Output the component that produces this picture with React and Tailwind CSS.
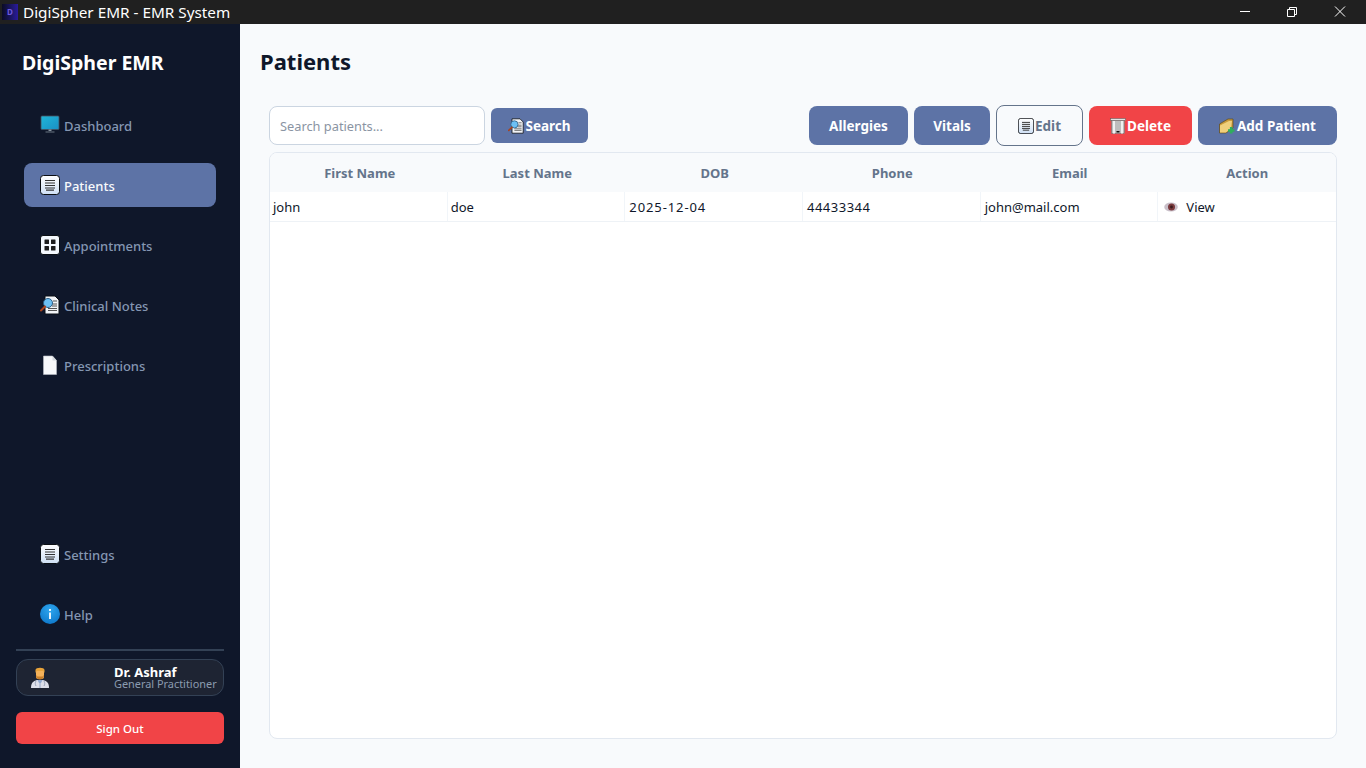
import React from 'react';

const font = "font-['Noto_Sans','Liberation_Sans',sans-serif]";

function ListIcon({ size = 20 }) {
  return (
    <svg width={size} height={size} viewBox="0 0 20 20" className="shrink-0">
      <defs>
        <linearGradient id="listBg" x1="0" y1="0" x2="0" y2="1">
          <stop offset="0" stopColor="#ffffff" />
          <stop offset="1" stopColor="#cfe0f5" />
        </linearGradient>
      </defs>
      <rect x="0.5" y="0.5" width="19" height="19" rx="3" fill="url(#listBg)" stroke="#0b0f14" />
      <path d="M5 5.500h10M5 8h10M5 10.500h10M5 13h10M6 15.200h8" stroke="#333" strokeWidth="1.200" />
    </svg>
  );
}

function GridIcon() {
  return (
    <svg width="20" height="20" viewBox="0 0 20 20" className="shrink-0">
      <rect x="0.5" y="0.5" width="19" height="19" rx="2.5" fill="#f4f8fd" stroke="#0b0f14" />
      <rect x="4.5" y="4.5" width="4.5" height="4.5" rx="0.5" fill="#1c1c1c" />
      <rect x="11" y="4.5" width="4.5" height="4.5" rx="0.5" fill="#1c1c1c" />
      <rect x="4.5" y="11" width="4.5" height="4.5" rx="0.5" fill="#1c1c1c" />
      <rect x="11" y="11" width="4.5" height="4.5" rx="0.5" fill="#1c1c1c" />
    </svg>
  );
}

function MonitorIcon() {
  return (
    <svg width="20" height="20" viewBox="0 0 20 20" className="shrink-0">
      <defs>
        <linearGradient id="screen" x1="0" y1="0" x2="1" y2="1">
          <stop offset="0" stopColor="#1fb6d8" />
          <stop offset="1" stopColor="#1a8fc4" />
        </linearGradient>
      </defs>
      <rect x="1" y="1" width="18" height="13.500" rx="1" fill="url(#screen)" stroke="#47525e" strokeWidth="0.800" />
      <path d="M8.500 14.500h3v1.500h-3z" fill="#8b97a3" />
      <path d="M5.500 16.500h9v1h-9z" fill="#6b7683" />
    </svg>
  );
}

function NotesIcon({ size = 20 }) {
  return (
    <svg width={size} height={size} viewBox="0 0 20 20" className="shrink-0">
      <path d="M5 1h10l4 4v14H5z" fill="#f2f4f7" stroke="#0b0f14" strokeWidth="1" />
      <path d="M12 9h5M12 11h5M8 13.500h9M8 15.500h9M13 6h4" stroke="#555" strokeWidth="1" />
      <circle cx="8" cy="8" r="4.500" fill="#6cc0f5" stroke="#2c5f88" strokeWidth="1" />
      <path d="M5 11.500L1 15.500" stroke="#a8431f" strokeWidth="2" strokeLinecap="round" />
    </svg>
  );
}

function PageIcon() {
  return (
    <svg width="20" height="20" viewBox="0 0 20 20" className="shrink-0">
      <path d="M3.500 1h9l4 4.500V19.500h-13z" fill="#f7f8fa" stroke="#b8bec6" strokeWidth="0.600" />
      <path d="M12.500 1v4.500h4z" fill="#d5d9de" />
    </svg>
  );
}

function InfoIcon() {
  return (
    <svg width="20" height="20" viewBox="0 0 20 20" className="shrink-0">
      <defs>
        <radialGradient id="info" cx="0.5" cy="0.3" r="0.800">
          <stop offset="0" stopColor="#2ea6ee" />
          <stop offset="1" stopColor="#0b74c8" />
        </radialGradient>
      </defs>
      <circle cx="10" cy="10" r="10" fill="url(#info)" />
      <rect x="9" y="8.500" width="2" height="6.500" fill="#e8f4fd" />
      <rect x="9" y="5" width="2" height="2" fill="#e8f4fd" />
    </svg>
  );
}

function DoctorIcon() {
  return (
    <svg width="18" height="21" viewBox="0 0 18 21" className="shrink-0">
      <path d="M0 21c0-5 2-7 6-8h6c4 1 6 3 6 8z" fill="#dcdfea" />
      <path d="M6.500 13l2.500 5 2.500-5z" fill="#8fa8cf" />
      <path d="M5 14c-1 2-1 3 0 5M13 14c1 2 1 3 0 5" stroke="#7a86a0" strokeWidth="0.700" fill="none" />
      <rect x="5" y="2" width="8" height="10" rx="2.500" fill="#f5b25a" />
      <path d="M4.500 6V3c0-3 9-3 9 0v3l-1-2h-7z" fill="#e8a33a" />
      <path d="M5 8c0 6 8 6 8 0l-1.500 1.500h-5z" fill="#c97f2a" />
      <rect x="8" y="16" width="2" height="5" fill="#b9c3d8" />
    </svg>
  );
}

function TrashIcon() {
  return (
    <svg width="16" height="16" viewBox="0 0 16 16" className="shrink-0">
      <rect x="0.500" y="0.500" width="15" height="2" fill="#e2e2e2" stroke="#555" strokeWidth="0.500" />
      <rect x="1.500" y="2.500" width="13" height="13" fill="#bdbdbd" stroke="#666" strokeWidth="0.500" />
      <path d="M4 3v12.500M12 3v12.500" stroke="#f0f0f0" strokeWidth="2" />
      <rect x="6.500" y="13" width="3" height="1.500" fill="#111" />
    </svg>
  );
}

function FolderAddIcon() {
  return (
    <svg width="16" height="16" viewBox="0 0 16 16" className="shrink-0">
      <path d="M0.500 6L9 1h5v9l-7 5H0.500z" fill="#c99a3c" stroke="#5d4a1e" strokeWidth="0.700" />
      <path d="M1 7.500l9-4.500 3 0-1 7-5 4.500H1z" fill="#f0cf7c" />
      <path d="M9 12.500h6.500M12.200 9v6.500" stroke="#2faf5c" strokeWidth="2.600" />
    </svg>
  );
}

function EyeIcon() {
  return (
    <svg width="14" height="10" viewBox="0 0 14 10" className="shrink-0">
      <ellipse cx="7" cy="5" rx="6.800" ry="4.600" fill="#c9bfc9" />
      <circle cx="7.500" cy="5" r="3.500" fill="#7a3a3d" />
      <circle cx="7.500" cy="5" r="1.400" fill="#3a1a1c" />
    </svg>
  );
}

function NavItem({ icon, label, active }) {
  return (
    <div className={`mx-6 mb-4 flex h-11 items-center gap-1 rounded-lg pl-4 text-[13px] font-medium ${active ? 'bg-[#5d73a6] text-[#f8fafc]' : 'text-[#8496b2]'}`}>
      <span className="flex w-5 justify-center">{icon}</span>
      <span className="mt-1">{label}</span>
    </div>
  );
}

const columns = ['First Name', 'Last Name', 'DOB', 'Phone', 'Email', 'Action'];
const patient = [
  { value: 'john', cls: 'pl-[3px]' },
  { value: 'doe', cls: 'pl-[3px]' },
  { value: '2025-12-04', cls: 'pl-1 tracking-[0.900px]' },
  { value: '44433344', cls: 'pl-1 tracking-[0.500px]' },
  { value: 'john@mail.com', cls: 'pl-1' },
];

export default function App() {
  return (
    <div className={`flex h-screen flex-col overflow-hidden bg-[#f8fafc] ${font}`}>
      <div className="flex h-6 shrink-0 items-center bg-[#202020] pl-[2px] text-white">
        <div className="mr-[5px] flex h-4 w-4 items-center justify-center bg-gradient-to-r from-[#0b0b25] to-[#2a1a9c] text-[8px] font-bold text-[#6d5ae0]">D</div>
        <span className="text-[15.300px]">DigiSpher EMR - EMR System</span>
        <div className="ml-auto flex items-center">
          <svg width="46" height="24" viewBox="0 0 46 24" className="mr-[1px]"><path d="M18 11.500h10" stroke="#fff" /></svg>
          <svg width="46" height="24" viewBox="0 0 46 24" className="mr-[2px]"><path d="M18.500 9.500h7v7h-7zM20.500 9.500v-2h7v7h-2" fill="none" stroke="#fff" /></svg>
          <svg width="46" height="24" viewBox="0 0 46 24" className="mr-[3px]"><path d="M18 6.500l10 10M28 6.500l-10 10" stroke="#fff" /></svg>
        </div>
      </div>

      <div className="flex min-h-0 flex-1">
        <aside className="flex w-60 shrink-0 flex-col bg-[#0f172a]">
          <div className="h-[79px] pl-[22px] pt-[23px] text-[19.500px] leading-[32px] font-bold text-white">DigiSpher EMR</div>
          <NavItem icon={<MonitorIcon />} label="Dashboard" />
          <NavItem icon={<ListIcon />} label="Patients" active />
          <NavItem icon={<GridIcon />} label="Appointments" />
          <NavItem icon={<NotesIcon />} label="Clinical Notes" />
          <NavItem icon={<PageIcon />} label="Prescriptions" />

          <div className="mt-auto">
            <NavItem icon={<ListIcon />} label="Settings" />
            <NavItem icon={<InfoIcon />} label="Help" />
            <div className="mx-4 -mt-[3px] h-[2px] bg-[#334155]" />
            <div className="mx-4 mt-[8px] flex h-[37px] items-center rounded-xl border border-[#334155] bg-[#1e2433] pl-[14px]">
              <DoctorIcon />
              <div className="ml-[65px] flex flex-col text-[13px] leading-[11px] whitespace-nowrap">
                <span className="font-bold text-white">Dr. Ashraf</span>
                <span className="text-[10.900px] text-[#8b9bb0]">General Practitioner</span>
              </div>
            </div>
            <div className="mx-4 mt-4 mb-6 flex h-8 items-center justify-center rounded-md bg-[#f14447] pt-[2px] text-[11.500px] font-medium text-white">Sign Out</div>
          </div>
        </aside>

        <main className="flex min-w-0 flex-1 flex-col pr-[29px] pb-[29px] pl-[29px]">
          <h1 className="-ml-[9px] pt-[19px] text-[22px] leading-[36px] font-bold text-[#0f172a]">Patients</h1>

          <div className="mt-[26px] flex h-[41px] items-center text-[13.500px] font-bold">
            <div className="flex h-[39px] w-[216px] items-center rounded-lg border border-[#cbd5e1] bg-white pt-[2px] pl-[10px] text-[12.800px] font-normal text-[#8a94a3]">Search patients...</div>
            <button className="ml-[6px] flex h-[35px] w-[97px] items-center justify-center gap-px rounded-md bg-[#5d73a6] pt-px text-white">
              <NotesIcon size={16} /><span>Search</span>
            </button>
            <button className="ml-auto h-[39px] w-[99px] rounded-lg bg-[#5d73a6] pt-px text-white">Allergies</button>
            <button className="ml-[6px] h-[39px] w-[76px] rounded-lg bg-[#5d73a6] pt-px text-white">Vitals</button>
            <button className="ml-[6px] flex h-[41px] w-[87px] items-center justify-center gap-px rounded-lg border border-[#64748b] pt-px text-[#64748b]">
              <ListIcon size={16} /><span>Edit</span>
            </button>
            <button className="ml-[6px] flex h-[39px] w-[103px] items-center justify-center gap-px rounded-lg bg-[#f14447] pt-px text-white">
              <TrashIcon /><span>Delete</span>
            </button>
            <button className="ml-[6px] flex h-[39px] w-[139px] items-center justify-center gap-[2px] rounded-lg bg-[#5d73a6] pt-px text-white">
              <FolderAddIcon /><span>Add Patient</span>
            </button>
          </div>

          <div className="mt-[6px] min-h-0 flex-1 overflow-hidden rounded-lg border border-[#e2e8f0] bg-white">
            <div className="grid h-[39px] grid-cols-6 items-center bg-[#f8fafc] pt-[2px] pl-px text-center text-[13px] font-bold text-[#64748b]">
              {columns.map((c) => <div key={c}>{c}</div>)}
            </div>
            <div className="grid h-[30px] grid-cols-6 border-b border-[#eef2f6] text-[13px] text-[#0f172a]">
              {patient.map((p) => (
                <div key={p.value} className={`flex items-center border-r border-[#f1f5f9] pt-[2px] ${p.cls}`}>{p.value}</div>
              ))}
              <div className="flex items-center gap-[8px] pl-[6px]"><EyeIcon /><span className="mt-[2px]">View</span></div>
            </div>
          </div>
        </main>
      </div>
    </div>
  );
}
